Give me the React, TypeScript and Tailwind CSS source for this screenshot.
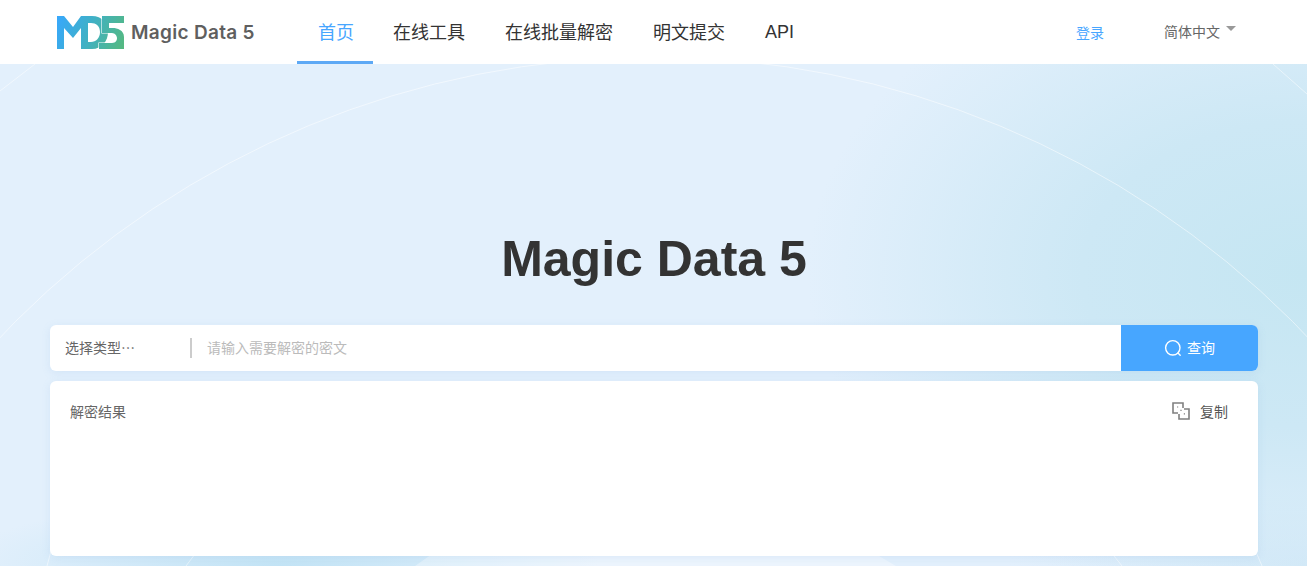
import React from "react";

const cjk = "font-['Noto_Sans_CJK_SC','Liberation_Sans',sans-serif]";

function Logo() {
  return (
    <svg width="68" height="34" viewBox="0 0 68 34" className="shrink-0">
      <defs>
        <linearGradient id="lg" gradientUnits="userSpaceOnUse" x1="0" y1="4" x2="68" y2="30">
          <stop offset="0" stopColor="#38a8fb" />
          <stop offset="0.45" stopColor="#3fb0c8" />
          <stop offset="1" stopColor="#55b97f" />
        </linearGradient>
      </defs>
      <path d="M0 1h7l9 11 8-11h7v33h-7V13l-8 10-9-10v21H0z" fill="url(#lg)" />
      <path d="M31 1h4c10 0 16 7 16 16s-6 17-16 17h-4v-7h3c5 0 9-4 9-10s-4-9-9-9h-3z" fill="url(#lg)" />
      <path
        d="M45 1h22v7H52v5h4c4 0 11 2 11 9v12H42v-6h13c4 0 5-3 5-5s-2-5-5-5H45z"
        fill="url(#lg)"
        stroke="#ffffff"
        strokeWidth="1.2"
        paintOrder="stroke"
      />
    </svg>
  );
}

function NavItem({ label, active, latin }: { label: string; active?: boolean; latin?: boolean }) {
  return (
    <a
      className={
        active
          ? "flex h-16 items-center border-b-[3px] border-[#5ea9f5] pl-[21px] pr-[19px] pt-[2px] text-[18px] text-[#47a6ff]"
          : latin
            ? "flex h-16 items-center border-b-[3px] border-transparent px-5 pt-[4px] font-['Liberation_Sans',sans-serif] text-[18px] text-[#333333]"
            : "flex h-16 items-center border-b-[3px] border-transparent px-5 pt-[2px] text-[18px] text-[#333333]"
      }
    >
      {label}
    </a>
  );
}

function Decor() {
  return (
    <svg className="absolute inset-0 h-full w-full" viewBox="0 64 1307 502" preserveAspectRatio="none">
      <g fill="none" stroke="#ffffff" strokeOpacity="0.5" strokeWidth="1">
        <circle cx="654" cy="960" r="903" />
        <path d="M0 91 L35 64" />
        <path d="M1273 64 L1307 94" />
        <path d="M204 542 L186 566" />
        <path d="M1103 542 L1122 566" />
        <path d="M1251 540 L1262 566" />
        <path d="M54 540 L47 566" />
      </g>
      <path d="M415 566 L452 540 L852 540 L896 566 Z" fill="#ffffff" fillOpacity="0.35" />
    </svg>
  );
}

export default function App() {
  return (
    <div className={`h-[566px] w-full overflow-hidden bg-white ${cjk}`}>
      <header className="flex h-16 items-center bg-white pl-[57px]">
        <Logo />
        <span className="ml-[6px] mt-[2px] w-[166px] shrink-0 font-['Inter',sans-serif] text-[19px] font-semibold tracking-[0.3px] text-[#5f5f5f]">
          Magic Data 5
        </span>
        <nav className="flex">
          <NavItem label="首页" active />
          <NavItem label="在线工具" />
          <NavItem label="在线批量解密" />
          <NavItem label="明文提交" />
          <NavItem label="API" latin />
        </nav>
        <a className="ml-[262px] text-[14px] text-[#47a6ff]">登录</a>
        <div className="ml-[60px] -mt-[2px] flex items-center text-[14px] text-[#666666]">
          <span>简体中文</span>
          <span className="mb-[5px] ml-[6px] h-0 w-0 border-x-[5px] border-t-[5px] border-x-transparent border-t-[#999999]" />
        </div>
      </header>

      <main className="relative h-[502px] overflow-hidden bg-[radial-gradient(ellipse_500px_340px_at_1307px_210px,#c5e6f2_0%,#cde8f5_45%,rgba(227,240,252,0)_100%),radial-gradient(ellipse_320px_70px_at_280px_502px,#c3e4f5_0%,rgba(227,240,252,0)_100%),radial-gradient(ellipse_300px_80px_at_1307px_502px,#d4e9f8_0%,rgba(227,240,252,0)_100%)] bg-[#e3f0fc]">
        <Decor />
        <div className="relative pl-[50px] pr-[49px] pt-[165px]">
          <h1 className="text-center font-['Liberation_Sans',sans-serif] text-[50px] font-bold leading-[60px] text-[#333333]">
            Magic Data 5
          </h1>

          <div className="mt-[36px] flex h-[46px] items-center overflow-hidden rounded-md bg-white shadow-[0_2px_8px_rgba(120,170,220,0.15)]">
            <div className="flex h-full w-[140px] shrink-0 items-center pb-[2px] pl-[15px] text-[14px] text-[#666666]">
              选择类型…
            </div>
            <div className="h-5 w-[2px] shrink-0 bg-[#cccccc]" />
            <div className="flex-1 pb-[2px] pl-[15px] text-[14px] text-[#bbbbbb]">请输入需要解密的密文</div>
            <button className="flex h-full w-[137px] shrink-0 items-center justify-center gap-[5px] bg-[#47a6ff] pb-[1px] text-[14px] text-white">
              <svg width="18" height="18" viewBox="0 0 18 18" fill="none" stroke="#ffffff" strokeWidth="1.4" strokeLinecap="round">
                <circle cx="8.8" cy="8.8" r="7.2" />
                <path d="M14 14l2.2 2.2" />
              </svg>
              查询
            </button>
          </div>

          <div className="mt-[10px] h-[175px] rounded-md bg-white px-5 py-5 shadow-[0_2px_8px_rgba(120,170,220,0.15)]">
            <div className="flex items-center justify-between">
              <span className="text-[14px] leading-5 text-[#666666]">解密结果</span>
              <span className="mr-[10px] flex items-center gap-[10px] text-[14px] leading-5 text-[#555555]">
                <svg width="18" height="18" viewBox="0 0 18 18" fill="none" stroke="#808080" strokeWidth="1.6">
                  <path d="M6 11H1V1h10v5" />
                  <path d="M12 7h5v10H7v-5" />
                  <path d="M5 5h1.2M8.4 8.4h1.2M11.8 11.8h1.2" strokeWidth="1.2" />
                </svg>
                复制
              </span>
            </div>
          </div>
        </div>
      </main>
    </div>
  );
}
